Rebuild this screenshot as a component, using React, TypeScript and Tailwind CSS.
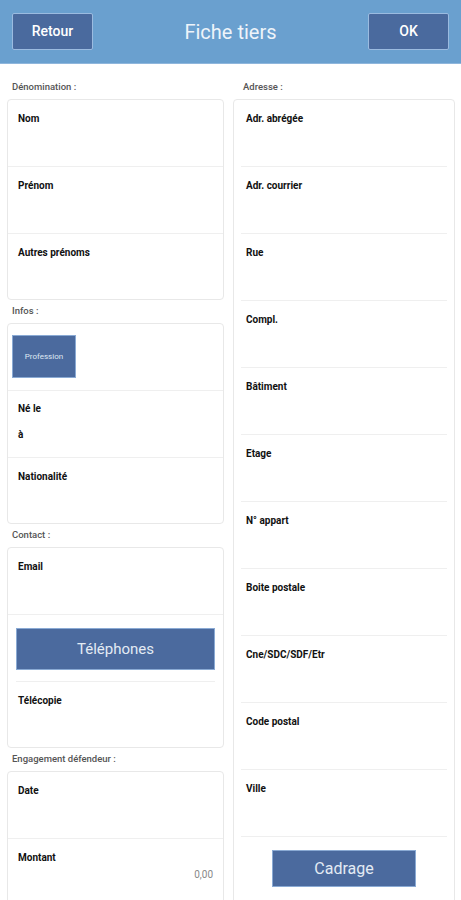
import React from "react";

const font = { fontFamily: "Roboto, 'Noto Sans', Arial, sans-serif" };

function Label({ children, className = "" }: { children: React.ReactNode; className?: string }) {
  return (
    <div className={`h-[23px] flex items-center text-[9.5px] font-medium text-[#555] ${className}`}>
      {children}
    </div>
  );
}

function Row({
  label,
  last = false,
  h = "h-[67px]",
  px = "px-[10px]",
  pt = "pt-[11px]",
  line = "left-0 right-0",
  children,
}: {
  label?: string;
  last?: boolean;
  h?: string;
  px?: string;
  pt?: string;
  line?: string;
  children?: React.ReactNode;
}) {
  return (
    <div className={`relative ${h} ${px}`}>
      {label && <div className={`${pt} text-[10px] font-bold text-[#111] leading-[15px]`}>{label}</div>}
      {children}
      {!last && <div className={`absolute bottom-0 h-px bg-[#efefef] ${line}`} />}
    </div>
  );
}

export default function App() {
  const right = [
    "Adr. abrégée",
    "Adr. courrier",
    "Rue",
    "Compl.",
    "Bâtiment",
    "Etage",
    "N° appart",
    "Boite postale",
    "Cne/SDC/SDF/Etr",
    "Code postal",
    "Ville",
  ];
  return (
    <div style={font} className="w-[461px] h-[900px] overflow-hidden bg-white">
      <div className="h-[64px] bg-[#6aa0cf] flex items-center justify-between px-[12px] border-b border-[#8fb6dc]">
        <button className="w-[81px] h-[37px] bg-[#4a6a9e] border-[1.5px] border-[#9bbbe0] rounded-[2px] text-white text-[14px] font-medium">
          Retour
        </button>
        <div className="text-[#eef4fa] text-[20px]">Fiche tiers</div>
        <button className="w-[81px] h-[37px] bg-[#4a6a9e] border-[1.5px] border-[#9bbbe0] rounded-[2px] text-white text-[14px] font-medium">
          OK
        </button>
      </div>
      <div className="flex pl-[7px] pr-[6px] pt-[12px] gap-[9px]">
        <div className="w-[217px] flex flex-col">
          <Label className="pl-[5px]">Dénomination :</Label>
          <div className="border border-[#e8e8e8] rounded-[4px]">
            <Row label="Nom" />
            <Row label="Prénom" />
            <Row label="Autres prénoms" last h="h-[65px]" />
          </div>
          <Label className="pl-[5px]">Infos :</Label>
          <div className="border border-[#e8e8e8] rounded-[4px]">
            <Row px="px-[4px]">
              <div className="pt-[11px]">
                <div className="w-[64px] h-[43px] bg-[#4b6a9e] border border-[#8aaad4] flex items-center justify-center text-[8px] text-[#dfe8f3]">
                  Profession
                </div>
              </div>
            </Row>
            <Row label="Né le" pt="pt-[10px]">
              <div className="pt-[11px] text-[10px] font-bold text-[#111] leading-[15px]">à</div>
            </Row>
            <Row label="Nationalité" last h="h-[65px]" />
          </div>
          <Label className="pl-[5px]">Contact :</Label>
          <div className="border border-[#e8e8e8] rounded-[4px]">
            <Row label="Email" />
            <Row px="px-[8px]" line="left-[8px] right-[8px]">
              <div className="pt-[13px]">
                <div className="h-[42px] bg-[#4b6a9e] border border-[#8aaad4] flex items-center justify-center text-[15px] text-[#e3ebf4]">
                  Téléphones
                </div>
              </div>
            </Row>
            <Row label="Télécopie" last h="h-[65px]" />
          </div>
          <Label className="pl-[5px]">Engagement défendeur :</Label>
          <div className="border border-[#e8e8e8] rounded-[4px]">
            <Row label="Date" />
            <Row label="Montant" last>
              <div className="absolute right-[10px] top-[28px] text-[10px] text-[#888]">0,00</div>
            </Row>
          </div>
        </div>
        <div className="flex-1 flex flex-col">
          <Label className="pl-[10px]">Adresse :</Label>
          <div className="border border-[#e8e8e8] rounded-[4px]">
            {right.map((r) => (
              <Row key={r} label={r} px="px-[12px]" line="left-[7px] right-[7px]" />
            ))}
            <div className="h-[80px] flex justify-center pt-[13px]">
              <div className="w-[144px] h-[37px] bg-[#4b6a9e] border border-[#8aaad4] flex items-center justify-center text-[16px] text-[#e3ebf4]">
                Cadrage
              </div>
            </div>
          </div>
        </div>
      </div>
    </div>
  );
}
